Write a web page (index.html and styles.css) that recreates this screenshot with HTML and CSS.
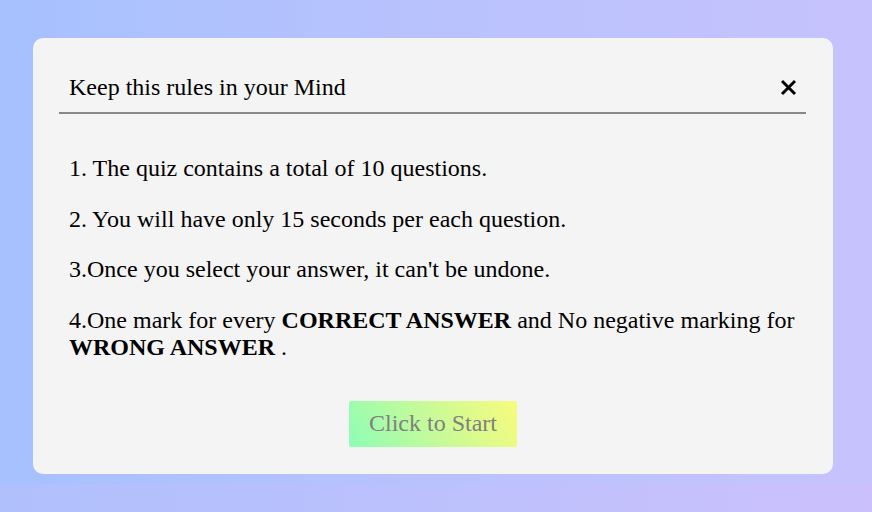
FILE: index.html
```html
<!DOCTYPE html>
<html>
<head>
<meta charset="utf-8">
<link rel="stylesheet" href="styles.css">
</head>
<body>
<div class="card">
  <div class="card-head">
    <span class="title">Keep this rules in your Mind</span>
    <span class="close">
      <svg width="17" height="17" viewBox="0 0 17 17"><path d="M2 2 L15 15 M15 2 L2 15" stroke="#000" stroke-width="2.9" stroke-linecap="butt"/></svg>
    </span>
  </div>
  <div class="rules">
    <p>1. The quiz contains a total of 10 questions.</p>
    <p>2. You will have only 15 seconds per each question.</p>
    <p>3.Once you select your answer, it can't be undone.</p>
    <p>4.One mark for every <b>CORRECT ANSWER</b> and No negative marking for <b>WRONG ANSWER</b> .</p>
  </div>
  <div class="actions">
    <button class="start">Click to Start</button>
  </div>
</div>
</body>
</html>
```
FILE: styles.css
```css
html {
  background: linear-gradient(to right, #b0c0fd, #bcc1fc 50%, #cbc0fc);
}
body {
  margin: 0;
  padding: 38px 0 10px;
  background: linear-gradient(to right, #a6c1fe, #b9c2fd 50%, #c6c2fd);
  font-family: "Liberation Serif", "Times New Roman", serif;
}
.card {
  width: 800px;
  height: 436px;
  box-sizing: border-box;
  margin-left: 33px;
  background: #f4f4f4;
  border-radius: 10px;
  padding: 0 27px 0 26px;
  display: flex;
  flex-direction: column;
}
.card-head {
  display: flex;
  justify-content: space-between;
  align-items: center;
  padding: 36px 9px 11px 10px;
  border-bottom: 2px solid #888;
}
.title {
  font-size: 24px;
  line-height: 27px;
  color: #000;
}
.close {
  display: flex;
  width: 17px;
  height: 17px;
}
.rules {
  padding: 41px 10px 0;
  font-size: 24px;
  line-height: 27px;
  color: #000;
}
.rules p {
  margin: 0 0 23.5px;
}
.rules p:last-child {
  margin-bottom: 0;
}
.actions {
  display: flex;
  justify-content: center;
  margin-top: 40px;
  padding-left: 1px;
}
.start {
  width: 168px;
  height: 46px;
  border: none;
  border-radius: 2px;
  background: linear-gradient(60deg, #8efdb6 0%, #c8fa98 50%, #f8fb7d 100%);
  color: #808080;
  font-family: "Liberation Serif", "Times New Roman", serif;
  font-size: 24px;
  padding: 0;
}
```
